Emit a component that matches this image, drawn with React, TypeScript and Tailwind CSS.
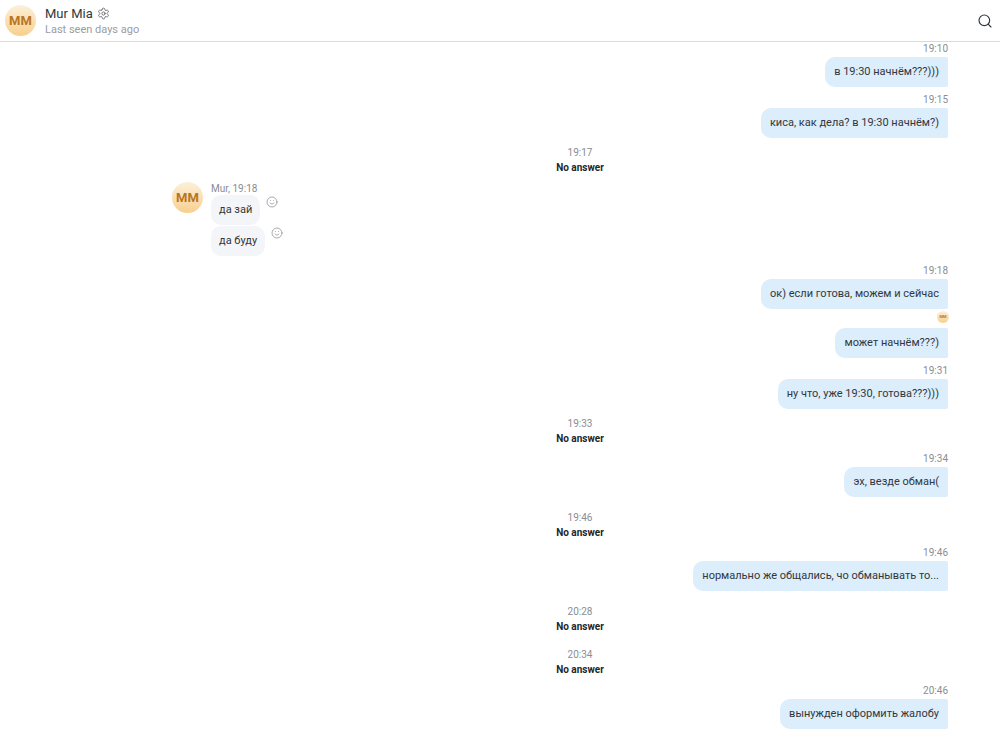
import { Search, Settings, Smile } from 'lucide-react';

const Initials = ({ className }: { className: string }) => (
  <div
    className={`flex items-center justify-center rounded-full bg-gradient-to-b from-[#fcf0da] to-[#f8cf8c] font-bold text-[#b9751f] ${className}`}
  >
    MM
  </div>
);

const Stamp = ({ time, top }: { time: string; top: string }) => (
  <div className={`text-right text-[10px] leading-[14px] text-[#8a8d91] ${top}`}>{time}</div>
);

const Outgoing = ({ text, top }: { text: string; top: string }) => (
  <div className={`flex justify-end ${top}`}>
    <div className="flex h-[30px] items-center rounded-l-[10px] rounded-r-[2px] bg-[#dcedfb] px-[9px] text-[11px] text-[#33373b]">
      {text}
    </div>
  </div>
);

const NoAnswer = ({ time, top }: { time: string; top: string }) => (
  <div className={`ml-[212px] text-center ${top}`}>
    <div className="text-[10px] leading-[14px] text-[#8a8d91]">{time}</div>
    <div className="mt-[1px] text-[10px] leading-[14px] font-bold text-[#22262a]">No answer</div>
  </div>
);

const Incoming = ({ text, gap }: { text: string; gap: string }) => (
  <div className={`flex items-start gap-[6px] ${gap}`}>
    <div className="flex h-[30px] items-center rounded-[10px] bg-[#f3f5f8] px-[8px] text-[11px] text-[#33373b]">
      {text}
    </div>
    <Smile className="mt-[1px] h-[12px] w-[12px] text-[#8a8d91]" strokeWidth={1.5} />
  </div>
);

export default function App() {
  return (
    <div className="h-[745px] w-[1000px] overflow-hidden bg-white font-['Roboto','Noto_Sans',sans-serif]">
      <header className="flex h-[42px] items-center justify-between border-b border-[#d9dbdd] pr-[7px] pl-[5px]">
        <div className="flex items-center gap-[9px]">
          <Initials className="h-[31px] w-[31px] text-[13px]" />
          <div>
            <div className="flex items-center gap-[4px] text-[13px] leading-[17px] text-[#33373b]">
              Mur Mia
              <Settings className="h-[13px] w-[13px] text-[#55595d]" strokeWidth={1.5} />
            </div>
            <div className="text-[11px] leading-[15px] text-[#9a9da1]">Last seen days ago</div>
          </div>
        </div>
        <Search className="h-[16px] w-[16px] text-[#33373b]" strokeWidth={1.75} />
      </header>

      <main className="pr-[52px]">
        <Stamp time="19:10" top="mt-[0px]" />
        <Outgoing text="в 19:30 начнём???)))" top="mt-[1px]" />
        <Stamp time="19:15" top="mt-[6px]" />
        <Outgoing text="киса, как дела? в 19:30 начнём?)" top="mt-[1px]" />
        <NoAnswer time="19:17" top="mt-[8px]" />

        <div className="mt-[7px] ml-[172px] flex gap-[8px]">
          <Initials className="h-[31px] w-[31px] text-[13px]" />
          <div>
            <div className="text-[10px] leading-[13px] text-[#8a8d91]">Mur, 19:18</div>
            <Incoming text="да зай" gap="" />
            <Incoming text="да буду" gap="mt-[1px]" />
          </div>
        </div>

        <Stamp time="19:18" top="mt-[8px]" />
        <Outgoing text="ок) если готова, можем и сейчас" top="mt-[1px]" />
        <div className="mt-[2px] flex justify-end">
          <Initials className="mr-[-1px] h-[12px] w-[12px] text-[4px]" />
        </div>
        <Outgoing text="может начнём???)" top="mt-[5px]" />
        <Stamp time="19:31" top="mt-[6px]" />
        <Outgoing text="ну что, уже 19:30, готова???)))" top="mt-[1px]" />
        <NoAnswer time="19:33" top="mt-[8px]" />
        <Stamp time="19:34" top="mt-[6px]" />
        <Outgoing text="эх, везде обман(" top="mt-[1px]" />
        <NoAnswer time="19:46" top="mt-[14px]" />
        <Stamp time="19:46" top="mt-[6px]" />
        <Outgoing text="нормально же общались, чо обманывать то..." top="mt-[1px]" />
        <NoAnswer time="20:28" top="mt-[14px]" />
        <NoAnswer time="20:34" top="mt-[14px]" />
        <Stamp time="20:46" top="mt-[7px]" />
        <Outgoing text="вынужден оформить жалобу" top="mt-[1px]" />
      </main>
    </div>
  );
}
